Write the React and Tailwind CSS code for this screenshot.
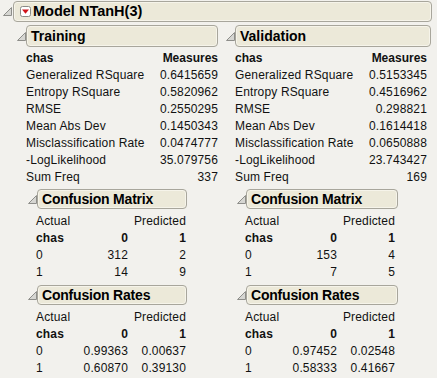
import React from "react";

const Tri = () => (
  <svg width="9" height="9" viewBox="0 0 9 9" className="shrink-0">
    <polygon points="8.5,0.5 8.5,8.5 0.5,8.5" fill="#d6d6d2" stroke="#8e8e8a" strokeWidth="1" strokeLinejoin="round" />
  </svg>
);

const RedIcon = () => (
  <svg width="11" height="11" viewBox="0 0 11 11" className="shrink-0">
    <rect x="0.5" y="0.5" width="10" height="10" rx="2" fill="#ffffff" stroke="#8a8a86" />
    <polygon points="2,3.5 9,3.5 5.5,7.8" fill="#d0141a" />
  </svg>
);

const boxCls =
  "border border-[#a8a69c] rounded-[4px] bg-[#ece9d9] flex items-center font-bold text-[14px] text-black shadow-[inset_0_0_0_1px_#f6f4ea]";

function SubHeader({ title, w }) {
  return (
    <div className="flex items-center h-[20px]">
      <Tri />
      <div className={`${boxCls} h-[20px] pl-[4px]`} style={{ width: w }}>
        <span className="tracking-[-0.2px]">{title}</span>
      </div>
    </div>
  );
}

function ConfTable({ rows }) {
  return (
    <div className="mt-[4px] ml-[8px] w-[150px] text-[12px] tracking-[0.15px]">
      <div className="flex justify-between h-[17px] leading-[17px]">
        <span>Actual</span>
        <span>Predicted</span>
      </div>
      <div className="grid grid-cols-[46px_46px_58px] h-[17px] leading-[17px] font-bold">
        <span>chas</span>
        <span className="text-right">0</span>
        <span className="text-right">1</span>
      </div>
      {rows.map((r, i) => (
        <div key={i} className="grid grid-cols-[46px_46px_58px] h-[17px] leading-[17px]">
          <span>{i}</span>
          <span className="text-right">{r[0]}</span>
          <span className="text-right">{r[1]}</span>
        </div>
      ))}
    </div>
  );
}

function Column({ title, boxW, subW, measures, cm, cr }) {
  return (
    <div className="flex flex-col">
      <div className="flex items-center h-[22px]">
        <Tri />
        <div className={`${boxCls} h-[22px] pl-[4px]`} style={{ width: boxW }}>
          <span>{title}</span>
        </div>
      </div>
      <div className="mt-[3px] ml-[9px] w-[192px] text-[12px] tracking-[0.15px]">
        <div className="flex justify-between h-[17px] leading-[17px] font-bold tracking-normal">
          <span>chas</span>
          <span>Measures</span>
        </div>
        {measures.map(([k, v]) => (
          <div key={k} className="flex justify-between h-[17px] leading-[17px]">
            <span>{k}</span>
            <span>{v}</span>
          </div>
        ))}
      </div>
      <div className="mt-[3px] ml-[11px]">
        <SubHeader title="Confusion Matrix" w={subW} />
        <ConfTable rows={cm} />
      </div>
      <div className="mt-[4px] ml-[11px]">
        <SubHeader title="Confusion Rates" w={subW} />
        <ConfTable rows={cr} />
      </div>
    </div>
  );
}

export default function App() {
  return (
    <div className="w-[437px] h-[378px] overflow-hidden bg-[#f2f1ed] text-[#111] font-['Liberation_Sans',Arial,sans-serif] pt-[1px]">
      <div className="flex items-center h-[21px] pl-[3px]">
        <Tri />
        <div className={`${boxCls} ml-[1px] w-[419px] h-[21px] pl-[6px]`}>
          <RedIcon />
          <span className="ml-[2px] text-[14.5px]">Model NTanH(3)</span>
        </div>
      </div>
      <div className="mt-[3px] pl-[17px] flex gap-[8px]">
        <div className="w-[201px]">
          <Column
            title="Training"
            boxW={192}
            subW={150}
            measures={[
              ["Generalized RSquare", "0.6415659"],
              ["Entropy RSquare", "0.5820962"],
              ["RMSE", "0.2550295"],
              ["Mean Abs Dev", "0.1450343"],
              ["Misclassification Rate", "0.0474777"],
              ["-LogLikelihood", "35.079756"],
              ["Sum Freq", "337"],
            ]}
            cm={[["312", "2"], ["14", "9"]]}
            cr={[["0.99363", "0.00637"], ["0.60870", "0.39130"]]}
          />
        </div>
        <div className="w-[205px]">
          <Column
            title="Validation"
            boxW={196}
            subW={152}
            measures={[
              ["Generalized RSquare", "0.5153345"],
              ["Entropy RSquare", "0.4516962"],
              ["RMSE", "0.298821"],
              ["Mean Abs Dev", "0.1614418"],
              ["Misclassification Rate", "0.0650888"],
              ["-LogLikelihood", "23.743427"],
              ["Sum Freq", "169"],
            ]}
            cm={[["153", "4"], ["7", "5"]]}
            cr={[["0.97452", "0.02548"], ["0.58333", "0.41667"]]}
          />
        </div>
      </div>
    </div>
  );
}
